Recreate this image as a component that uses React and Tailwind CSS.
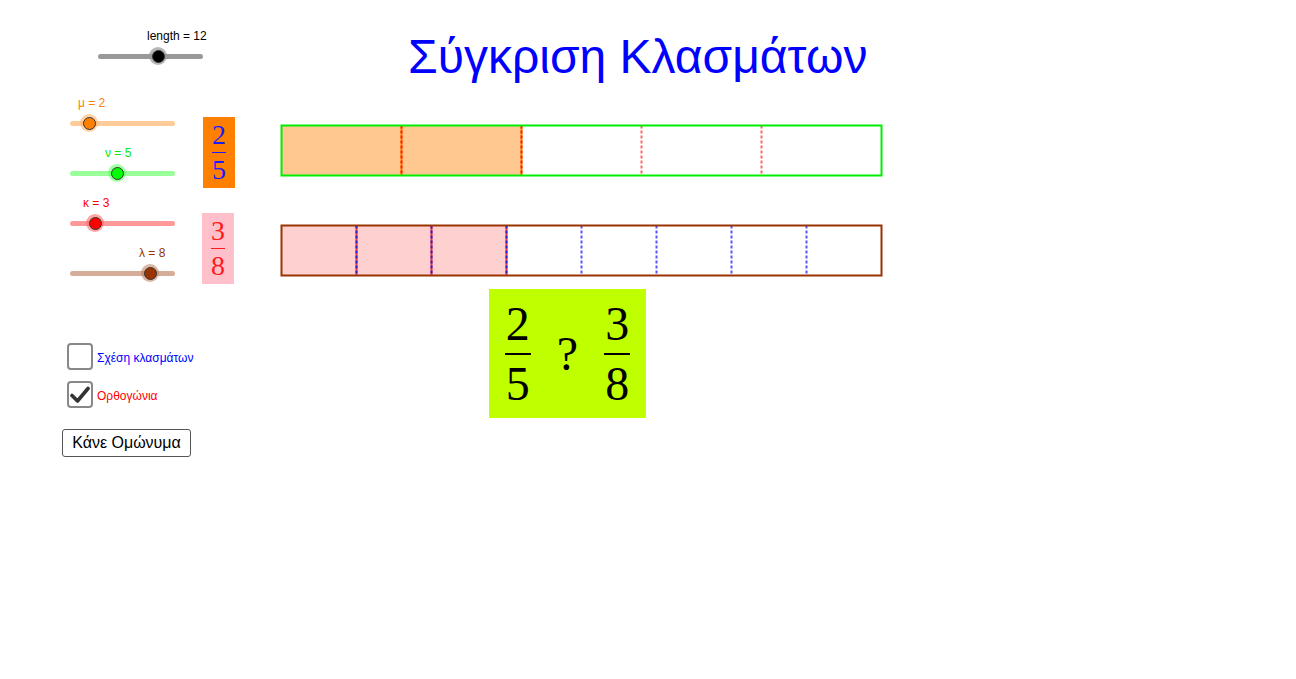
import React from "react";

const sans = { fontFamily: '"Liberation Sans", Arial, sans-serif' };

const Slider = ({ left, top, width, knob, label, labelLeft, labelClass, trackClass, knobClass, haloClass }) => (
  <div className="absolute" style={{ left, top }}>
    <div className={`absolute text-[12px] leading-none whitespace-nowrap ${labelClass}`} style={{ left: labelLeft - left, top: -26 }}>
      {label}
    </div>
    <div className={`h-[5px] rounded-full ${trackClass}`} style={{ width, marginTop: -2.5 }} />
    <div className={`absolute w-[18px] h-[18px] rounded-full ${haloClass}`} style={{ left: knob - left - 9, top: -9 }} />
    <div className={`absolute w-[13px] h-[13px] rounded-full border border-[#333] ${knobClass}`} style={{ left: knob - left - 6.5, top: -6.5 }} />
  </div>
);

const Frac = ({ num, den, size, bar, barH, color, gap }) => (
  <div className={`flex flex-col items-center ${color}`} style={{ fontFamily: '"Liberation Serif", "Times New Roman", serif', fontSize: size, lineHeight: 1 }}>
    <span>{num}</span>
    <span className="bg-current" style={{ width: bar, height: barH, margin: `${gap}px 0` }} />
    <span>{den}</span>
  </div>
);

const Bars = () => (
  <svg className="absolute left-[278px] top-[122px]" width="608" height="157" viewBox="0 0 608 157">
    {/* top bar: 2/5 */}
    <rect x="3.5" y="3.5" width="240" height="50" fill="#ffc891" stroke="#ff8000" strokeWidth="1" />
    {[123.5, 243.5].map((x) => (
      <g key={x}>
        <line x1={x} y1="3.5" x2={x} y2="53.5" stroke="#ff8000" strokeWidth="2" />
        <line x1={x} y1="3.5" x2={x} y2="53.5" stroke="#ff2200" strokeWidth="2" strokeDasharray="3 2" />
      </g>
    ))}
    {[363.5, 483.5].map((x) => (
      <line key={x} x1={x} y1="3.5" x2={x} y2="53.5" stroke="#ff6666" strokeWidth="2" strokeDasharray="3 2" />
    ))}
    <rect x="3.5" y="3.5" width="600" height="50" fill="none" stroke="#00ee00" strokeWidth="2" />

    {/* bottom bar: 3/8 */}
    <rect x="3.5" y="103.5" width="225" height="50" fill="#ffd0d0" stroke="#ff3333" strokeWidth="1" />
    {[78.5, 153.5, 228.5].map((x) => (
      <g key={x}>
        <line x1={x} y1="103.5" x2={x} y2="153.5" stroke="#ff3333" strokeWidth="2" />
        <line x1={x} y1="103.5" x2={x} y2="153.5" stroke="#3322cc" strokeWidth="2" strokeDasharray="3 2" />
      </g>
    ))}
    {[303.5, 378.5, 453.5, 528.5].map((x) => (
      <line key={x} x1={x} y1="103.5" x2={x} y2="153.5" stroke="#5555ff" strokeWidth="2" strokeDasharray="3 2" />
    ))}
    <rect x="3.5" y="103.5" width="600" height="50" fill="none" stroke="#993300" strokeWidth="2" />
  </svg>
);

export default function App() {
  return (
    <div className="relative w-full h-[679px] bg-white overflow-hidden" style={sans}>
      <h1 className="absolute left-[408px] top-[33px] text-[48px] leading-none text-[#0000ff] whitespace-nowrap">
        Σύγκριση Κλασμάτων
      </h1>

      <Slider left={98} top={56} width={105} knob={158} label="length = 12" labelLeft={147}
        labelClass="text-black" trackClass="bg-[#999999]" knobClass="bg-black" haloClass="bg-[#999999]/70" />
      <Slider left={70} top={123} width={105} knob={89} label="μ = 2" labelLeft={78}
        labelClass="text-[#ff8000]" trackClass="bg-[#ffcc99]" knobClass="bg-[#ff8000]" haloClass="bg-[#ffb36b]/60" />
      <Slider left={70} top={173} width={105} knob={117} label="ν = 5" labelLeft={105}
        labelClass="text-[#00ee00]" trackClass="bg-[#99ff99]" knobClass="bg-[#00ff00]" haloClass="bg-[#66ff66]/60" />
      <Slider left={70} top={223} width={105} knob={95} label="κ = 3" labelLeft={83}
        labelClass="text-[#ff0000]" trackClass="bg-[#ff9999]" knobClass="bg-[#ff0000]" haloClass="bg-[#ff6666]/60" />
      <Slider left={70} top={273} width={105} knob={150} label="λ = 8" labelLeft={139}
        labelClass="text-[#993300]" trackClass="bg-[#d6ad99]" knobClass="bg-[#993300]" haloClass="bg-[#c28466]/60" />

      <div className="absolute left-[203px] top-[117px] w-[32px] h-[71px] bg-[#ff8000] flex items-center justify-center">
        <Frac num="2" den="5" size={28} bar={14} barH={1.5} color="text-[#1a1aff]" gap={3} />
      </div>
      <div className="absolute left-[202px] top-[213px] w-[32px] h-[71px] bg-[#ffc0cb] flex items-center justify-center">
        <Frac num="3" den="8" size={28} bar={14} barH={1.5} color="text-[#ff1a1a]" gap={3} />
      </div>

      <Bars />

      <div className="absolute left-[489px] top-[289px] w-[157px] h-[129px] bg-[#c0ff00] flex items-center justify-center gap-[26px] text-black">
        <Frac num="2" den="5" size={48} bar={26} barH={2} color="text-black" gap={5} />
        <span className="text-[48px] leading-none" style={{ fontFamily: '"Liberation Serif", serif' }}>?</span>
        <Frac num="3" den="8" size={48} bar={26} barH={2} color="text-black" gap={5} />
      </div>

      <div className="absolute left-[67px] top-[343px] flex flex-col gap-[11px]">
        <div className="flex items-center gap-[4px]">
          <div className="w-[26px] h-[27px] rounded-[4px] border-2 border-[#888] bg-white" />
          <span className="text-[12px] text-[#0000ff] pt-[2px]">Σχέση κλασμάτων</span>
        </div>
        <div className="flex items-center gap-[4px]">
          <div className="w-[26px] h-[27px] rounded-[4px] border-2 border-[#888] bg-white flex items-center justify-center">
            <svg width="20" height="18" viewBox="0 0 20 18">
              <path d="M2 9.5 L7.5 15 L18 2.5" fill="none" stroke="#333" strokeWidth="3.6" strokeLinecap="round" strokeLinejoin="round" />
            </svg>
          </div>
          <span className="text-[12px] text-[#ff0000] pt-[2px]">Ορθογώνια</span>
        </div>
      </div>

      <button className="absolute left-[62px] top-[429px] w-[129px] h-[28px] rounded-[3px] border-[1.5px] border-[#555] bg-white text-[16px] text-black leading-none">
        Κάνε Ομώνυμα
      </button>
    </div>
  );
}
